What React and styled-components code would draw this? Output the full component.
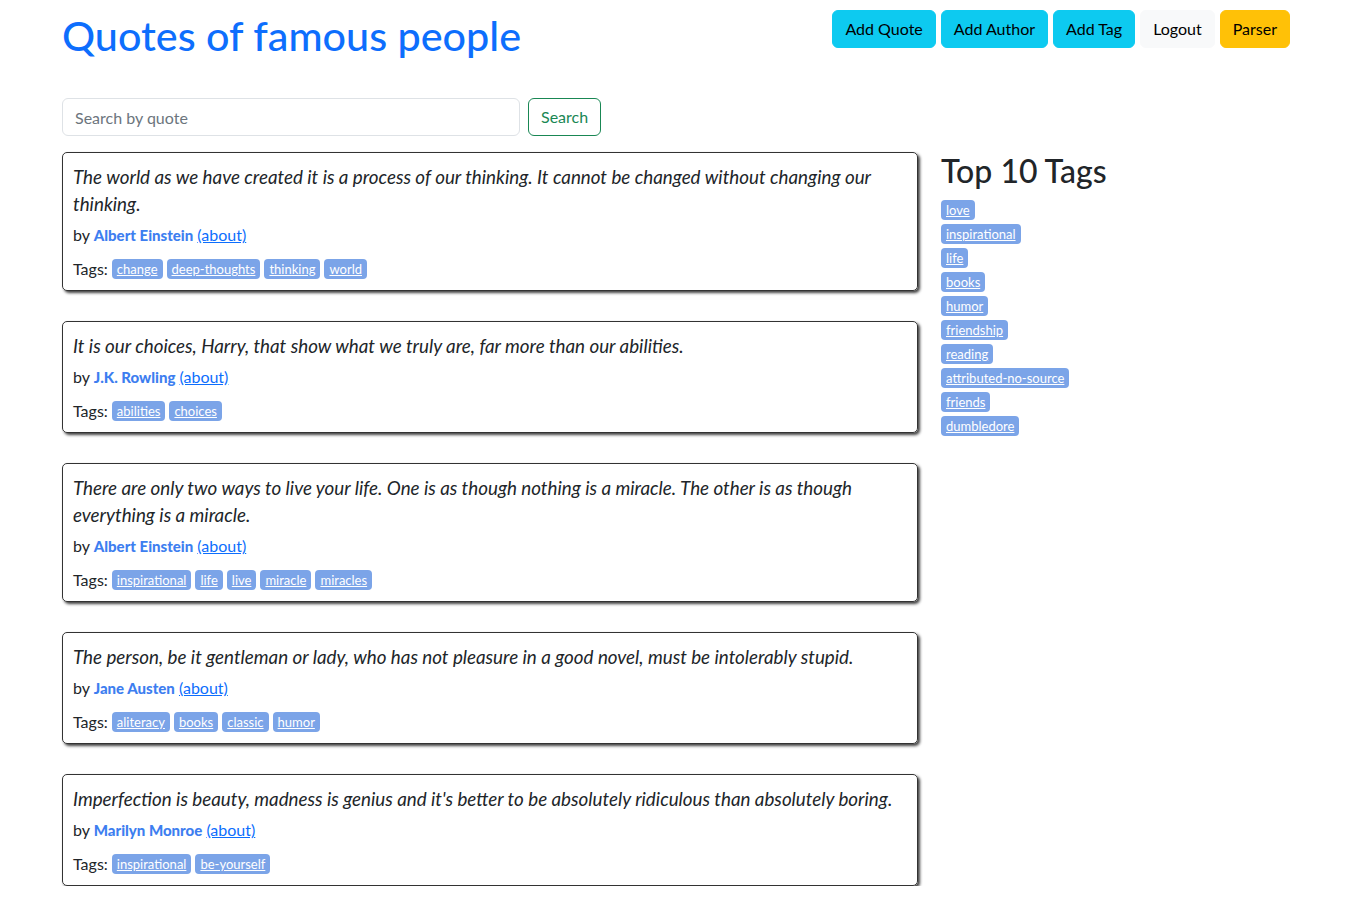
import styled, { createGlobalStyle } from "styled-components";

const quotes = [
  {
    text: "The world as we have created it is a process of our thinking. It cannot be changed without changing our thinking.",
    author: "Albert Einstein",
    tags: ["change", "deep-thoughts", "thinking", "world"],
  },
  {
    text: "It is our choices, Harry, that show what we truly are, far more than our abilities.",
    author: "J.K. Rowling",
    tags: ["abilities", "choices"],
  },
  {
    text: "There are only two ways to live your life. One is as though nothing is a miracle. The other is as though everything is a miracle.",
    author: "Albert Einstein",
    tags: ["inspirational", "life", "live", "miracle", "miracles"],
  },
  {
    text: "The person, be it gentleman or lady, who has not pleasure in a good novel, must be intolerably stupid.",
    author: "Jane Austen",
    tags: ["aliteracy", "books", "classic", "humor"],
  },
  {
    text: "Imperfection is beauty, madness is genius and it's better to be absolutely ridiculous than absolutely boring.",
    author: "Marilyn Monroe",
    tags: ["inspirational", "be-yourself"],
  },
];

const topTags = [
  "love",
  "inspirational",
  "life",
  "books",
  "humor",
  "friendship",
  "reading",
  "attributed-no-source",
  "friends",
  "dumbledore",
];

export default function App() {
  return (
    <>
      <GlobalStyle />
      <Page>
        <Header>
          <Title>Quotes of famous people</Title>
          <Nav>
            <Button variant="info">Add Quote</Button>
            <Button variant="info">Add Author</Button>
            <Button variant="info">Add Tag</Button>
            <Button variant="light">Logout</Button>
            <Button variant="warning">Parser</Button>
          </Nav>
        </Header>
        <SearchForm>
          <SearchInput placeholder="Search by quote" />
          <SearchButton>Search</SearchButton>
        </SearchForm>
        <Content>
          <QuoteList>
            {quotes.map((q, index) => (
              <QuoteCard key={index}>
                <QuoteText>{q.text}</QuoteText>
                <Byline>
                  by <Author>{q.author}</Author> <a href="#">(about)</a>
                </Byline>
                <Tags>
                  Tags:
                  {q.tags.map((tag) => (
                    <Tag key={tag} href="#">
                      {tag}
                    </Tag>
                  ))}
                </Tags>
              </QuoteCard>
            ))}
          </QuoteList>
          <Sidebar>
            <SideTitle>Top 10 Tags</SideTitle>
            <TagList>
              {topTags.map((tag) => (
                <TagItem key={tag}>
                  <Tag href="#">{tag}</Tag>
                </TagItem>
              ))}
            </TagList>
          </Sidebar>
        </Content>
      </Page>
    </>
  );
}

const GlobalStyle = createGlobalStyle`
  * {
    box-sizing: border-box;
  }
  body {
    margin: 0;
    background: #fff;
    color: #212529;
    font-family: Lato, "Noto Sans", sans-serif;
    font-size: 16px;
    line-height: 1.5;
  }
  a {
    color: #0d6efd;
  }
`;

const Page = styled.div`
  padding: 0 57px 0 62px;
`;

const Header = styled.div`
  display: flex;
  justify-content: space-between;
  align-items: flex-start;
  height: 98px;
`;

const Title = styled.h1`
  margin: 11px 0 0;
  font-size: 41.3px;
  font-weight: 500;
  line-height: 1.2;
  color: #0d6efd;
`;

const Nav = styled.div`
  display: flex;
  gap: 5px;
  margin-top: 10px;
`;

const buttonColors = {
  info: "#0dcaf0",
  light: "#f8f9fa",
  warning: "#ffc107",
};

const Button = styled.button`
  height: 38px;
  padding: 6px 12px;
  border: 1px solid ${(p) => buttonColors[p.variant]};
  border-radius: 6px;
  background: ${(p) => buttonColors[p.variant]};
  color: #000;
  font-family: inherit;
  font-size: 16px;
  line-height: 1.5;
`;

const SearchForm = styled.form`
  display: flex;
  gap: 8px;
  margin-bottom: 16px;
`;

const SearchInput = styled.input`
  width: 458px;
  height: 38px;
  padding: 6px 12px;
  border: 1px solid #dee2e6;
  border-radius: 6px;
  font-family: inherit;
  font-size: 16px;
  color: #212529;
  &::placeholder {
    color: #6c757d;
  }
`;

const SearchButton = styled.button`
  height: 38px;
  padding: 6px 12px;
  border: 1px solid #198754;
  border-radius: 6px;
  background: #fff;
  color: #198754;
  font-family: inherit;
  font-size: 16px;
  line-height: 1.5;
`;

const Content = styled.div`
  display: flex;
  gap: 23px;
`;

const QuoteList = styled.div`
  width: 856px;
  display: flex;
  flex-direction: column;
  gap: 30px;
`;

const QuoteCard = styled.div`
  padding: 10px 10px 9px;
  border: 1px solid #333;
  border-radius: 5px;
  box-shadow: 2px 2px 3px rgba(0, 0, 0, 0.75);
`;

const QuoteText = styled.p`
  margin: 0 0 6px;
  font-size: 18.8px;
  line-height: 27px;
  font-style: italic;
`;

const Byline = styled.p`
  margin: 0 0 10px;
  line-height: 24px;
`;

const Author = styled.b`
  color: #3d7ef0;
  font-weight: 900;
  font-size: 15px;
`;

const Tags = styled.div`
  display: flex;
  align-items: center;
  gap: 4px;
  line-height: 24px;
`;

const Tag = styled.a`
  display: inline-block;
  padding: 0 5px;
  border-radius: 4px;
  background: #7ba4e8;
  color: #fff;
  font-size: 13px;
  line-height: 20px;
`;

const Sidebar = styled.div`
  flex: 1;
`;

const SideTitle = styled.h2`
  margin: 0 0 10px;
  font-size: 32px;
  font-weight: 500;
  line-height: 1.2;
`;

const TagList = styled.ul`
  list-style: none;
  margin: 0;
  padding: 0;
  display: flex;
  flex-direction: column;
  align-items: flex-start;
  gap: 4px;
`;

const TagItem = styled.li`
  display: flex;
  line-height: 20px;
`;
